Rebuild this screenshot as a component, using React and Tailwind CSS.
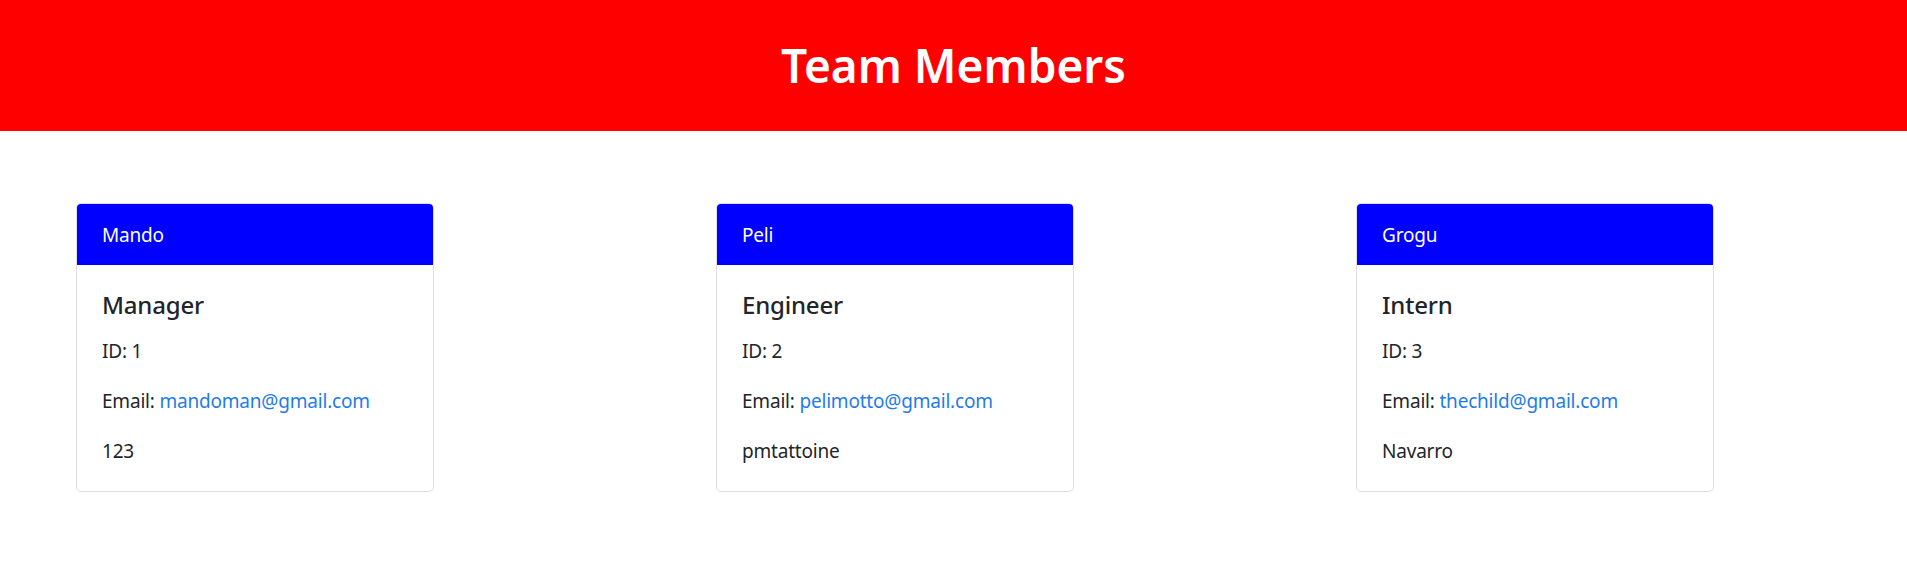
import React from "react";

const team = [
  { name: "Mando", role: "Manager", id: 1, email: "mandoman@gmail.com", extra: "123" },
  { name: "Peli", role: "Engineer", id: 2, email: "pelimotto@gmail.com", extra: "pmtattoine" },
  { name: "Grogu", role: "Intern", id: 3, email: "thechild@gmail.com", extra: "Navarro" },
];

function MemberCard({ member }) {
  return (
    <div className="w-[358px] rounded-[5px] border border-[#dfdfdf] bg-white overflow-hidden tracking-[-0.2px]">
      <div className="bg-[#0000ff] text-white text-[19px] leading-[30px] px-[25px] pt-[16px] pb-[15px]">
        {member.name}
      </div>
      <div className="px-[25px] pt-[25px] pb-[25px] text-[#212529]">
        <h5 className="text-[24px] leading-[30px] font-medium mb-[16px]">{member.role}</h5>
        <p className="text-[19px] leading-[30px] mb-[20px]">ID: {member.id}</p>
        <p className="text-[19px] leading-[30px] mb-[20px]">
          Email: <a href={`mailto:${member.email}`} className="text-[#1f7ce8]">{member.email}</a>
        </p>
        <p className="text-[19px] leading-[30px]">{member.extra}</p>
      </div>
    </div>
  );
}

export default function App() {
  return (
    <div className="min-h-[578px] bg-white font-['Noto_Sans',sans-serif]">
      <header className="h-[131px] bg-[#ff0000] flex items-center justify-center">
        <h1 className="text-white text-[46px] font-semibold leading-none -mt-[2px]">Team Members</h1>
      </header>
      <main className="flex items-start gap-[282px] pl-[76px] pt-[72px]">
        {team.map((m) => (
          <MemberCard key={m.id} member={m} />
        ))}
      </main>
    </div>
  );
}
